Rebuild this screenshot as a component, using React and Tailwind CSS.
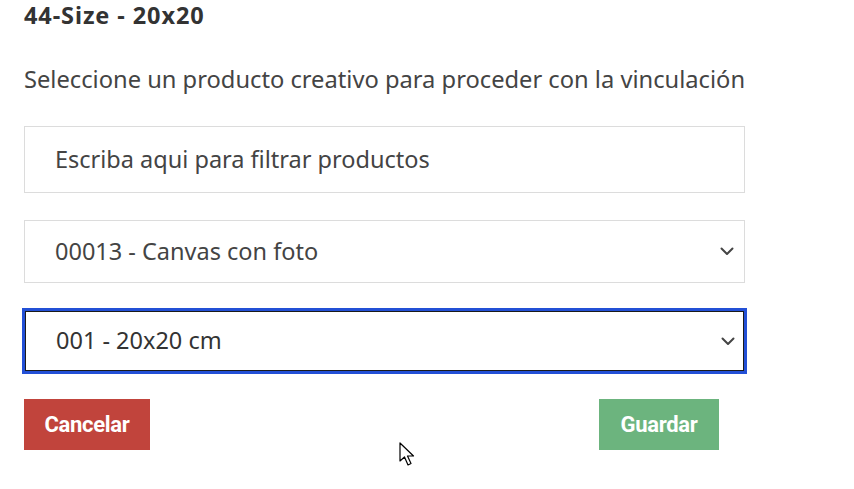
import React from 'react';

const Chevron = () => (
  <svg width="14" height="9" viewBox="0 0 14 9" className="shrink-0">
    <path d="M1.5 1.5 L7 7 L12.5 1.5" fill="none" stroke="#444" strokeWidth="2" strokeLinecap="round" strokeLinejoin="round" />
  </svg>
);

const Cursor = () => (
  <svg width="20" height="30" viewBox="0 0 20 30" className="absolute left-[399px] top-[442px]">
    <path d="M1 1 L1 19 L5.5 15 L9 23 L12 21.5 L8.5 14 L14.5 14 Z" fill="#fff" stroke="#000" strokeWidth="1.2" strokeLinejoin="round" />
  </svg>
);

export default function App() {
  return (
    <div className="relative w-[854px] h-[489px] bg-white font-['Noto_Sans',sans-serif] text-[#444]">
      <div className="flex flex-col pl-[24px] w-[745px]">
        <h1 className="h-[30px] leading-[30px] text-[23.5px] font-bold text-[#333] tracking-[0.9px] whitespace-nowrap overflow-visible">
          44-Size - 20x20
        </h1>
        <p className="mt-[33px] leading-[32px] text-[23.7px] whitespace-nowrap">
          Seleccione un producto creativo para proceder con la vinculación
        </p>

        <div className="mt-[31px] h-[67px] border border-[#dcdcdc] flex items-center pl-[30px] text-[23.5px]">
          Escriba aqui para filtrar productos
        </div>

        <div className="mt-[27px] h-[63px] border border-[#dcdcdc] flex items-center justify-between pl-[30px] pr-[10px] text-[23.5px]">
          <span>00013 - Canvas con foto</span>
          <Chevron />
        </div>

        <div className="mt-[25px] -mx-[2px] h-[66px] border-[3px] border-[#2350d6] shadow-[inset_0_0_0_1px_#1a1a1a] flex items-center justify-between pl-[31px] pr-[9px] text-[23.5px] text-[#333]">
          <span>001 - 20x20 cm</span>
          <Chevron />
        </div>

        <div className="mt-[25px] flex justify-between pr-[26px]">
          <button className="w-[126px] h-[51px] bg-[#c1443c] text-white font-bold text-[22px] tracking-[-0.3px] font-['Roboto',sans-serif]">
            Cancelar
          </button>
          <button className="w-[120px] h-[51px] bg-[#6cb47e] text-white font-bold text-[22px] tracking-[-0.3px] font-['Roboto',sans-serif]">
            Guardar
          </button>
        </div>
      </div>
      <Cursor />
    </div>
  );
}
